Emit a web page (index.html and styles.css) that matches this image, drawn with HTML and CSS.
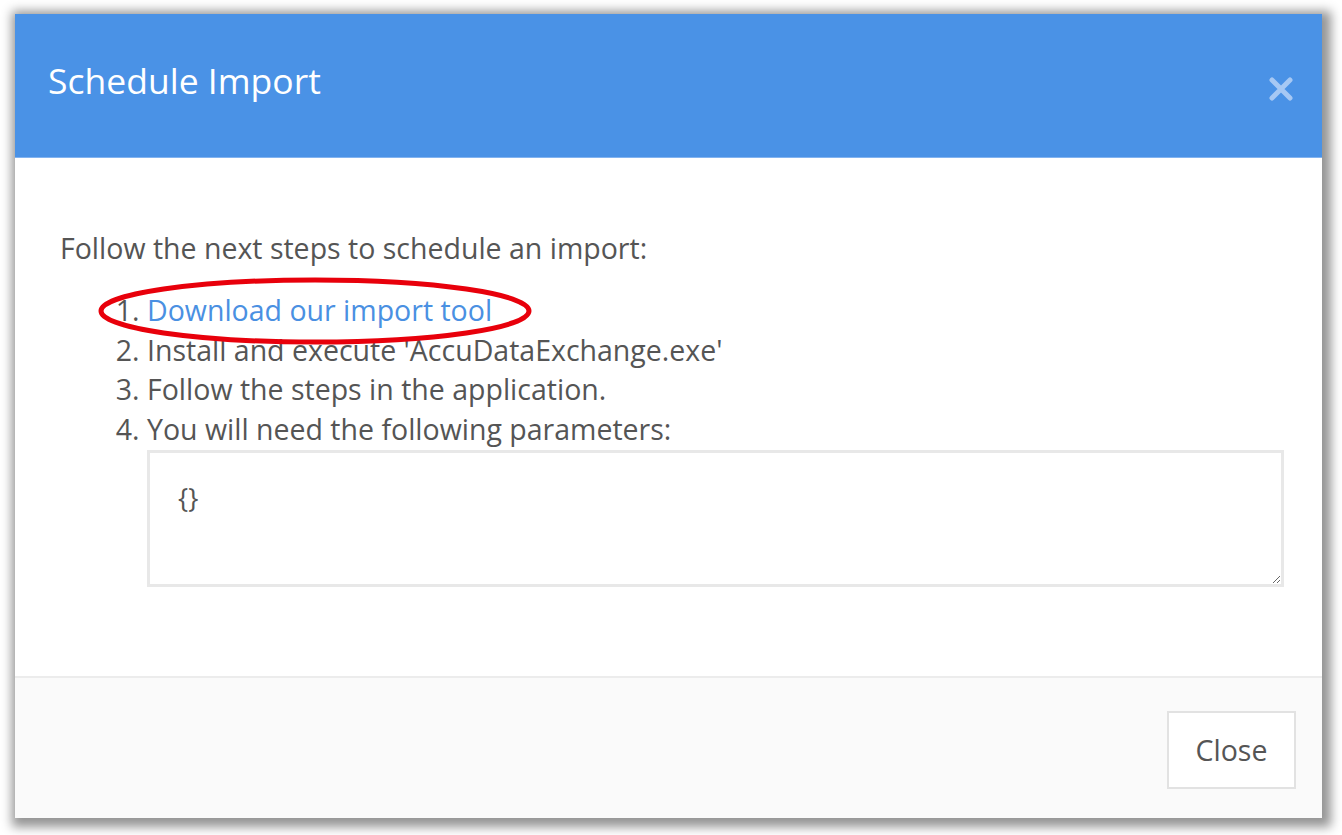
FILE: index.html
```html
<!DOCTYPE html>
<html lang="en">
<head>
  <meta charset="UTF-8" />
  <title>Schedule Import</title>
  <link rel="stylesheet" href="styles.css">
</head>
<body>
  <div class="modal">
    <div class="modal-header">
      <h1 class="modal-title">Schedule Import</h1>
      <button class="close-x" aria-label="Close">
        <svg width="28" height="28" viewBox="0 0 28 28">
          <path d="M5 5 L23 23 M23 5 L5 23" stroke="currentColor" stroke-width="5" stroke-linecap="round" fill="none"/>
        </svg>
      </button>
    </div>

    <div class="modal-body">
      <p class="intro">Follow the next steps to schedule an import:</p>
      <ol class="steps">
        <li class="first">
          <a href="#">Download our import tool</a>
          <svg class="mark" width="440" height="74" viewBox="0 0 440 74">
            <ellipse cx="220" cy="37" rx="214" ry="31" stroke="#e8000b" stroke-width="5" fill="none"/>
          </svg>
        </li>
        <li>Install and execute 'AccuDataExchange.exe'</li>
        <li>Follow the steps in the application.</li>
        <li>You will need the following parameters:</li>
      </ol>
      <textarea class="params">{}</textarea>
    </div>

    <div class="modal-footer">
      <button class="btn">Close</button>
    </div>
  </div>
</body>
</html>
```

FILE: styles.css
```css
html, body {
  margin: 0;
  padding: 0;
  background: #fff;
}

body {
  padding: 14px 20px 17px 15px;
  font-family: 'Open Sans', 'Liberation Sans', sans-serif;
  color: #555;
}

.modal {
  width: 1307px;
  height: 804px;
  background: #fff;
  display: flex;
  flex-direction: column;
  box-shadow: 3px 3px 10px 6px rgba(0,0,0,0.42);
}

.modal-header {
  height: 143px;
  background: #4a92e6;
  border-bottom: 1px solid #82b3f0;
  display: flex;
  align-items: center;
  justify-content: space-between;
  padding: 0 27px 0 33px;
}

.modal-title {
  margin: 0 0 12px 0;
  font-size: 35.5px;
  font-weight: normal;
  color: #fff;
}

.close-x {
  background: none;
  border: 0;
  padding: 0;
  color: #a6c8f4;
  margin-top: 6px;
  display: flex;
}

.modal-body {
  flex: 1;
  padding: 70px 38px 0 45px;
}

.intro {
  margin: 0;
  font-size: 28.5px;
  line-height: 40px;
}

.steps {
  margin: 23px 0 0 0;
  padding-left: 87px;
  font-size: 28.5px;
  line-height: 39.7px;
}

.first {
  position: relative;
}

.first a {
  color: #4a90e2;
  text-decoration: none;
}

.mark {
  position: absolute;
  left: -52px;
  top: -17px;
  pointer-events: none;
}

.params {
  display: block;
  box-sizing: border-box;
  width: 1137px;
  height: 137px;
  margin: 0 0 0 87px;
  border: 3px solid #e8e8e8;
  padding: 26px 28px;
  font-family: 'Open Sans', 'Liberation Sans', sans-serif;
  font-size: 27px;
  color: #555;
  resize: vertical;
}

.modal-footer {
  height: 142px;
  background: #fafafa;
  border-top: 2px solid #ececec;
  display: flex;
  justify-content: flex-end;
  align-items: flex-start;
  padding: 33px 26px 0 0;
  box-sizing: border-box;
}

.btn {
  width: 129px;
  height: 78px;
  background: #fff;
  border: 2px solid #e2e2e2;
  font-family: 'Open Sans', 'Liberation Sans', sans-serif;
  font-size: 28.5px;
  color: #555;
}
```
